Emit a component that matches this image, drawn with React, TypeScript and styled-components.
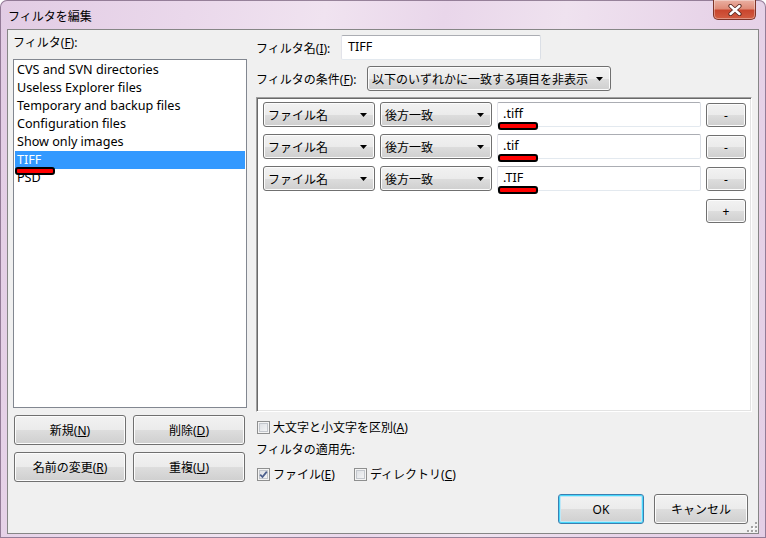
import React from 'react'
import styled, { createGlobalStyle } from 'styled-components'

const GlobalStyle = createGlobalStyle`
  html, body {
    margin: 0;
    padding: 0;
    background: #ffffff;
  }
  body {
    font-family: 'Noto Sans', 'Noto Sans CJK JP', sans-serif;
    font-size: 12px;
    color: #000;
  }
  * {
    box-sizing: border-box;
  }
`

const Window = styled.div`
  position: relative;
  width: 766px;
  height: 538px;
  display: flex;
  flex-direction: column;
  border-radius: 7px 7px 0 0;
  overflow: hidden;
  background: linear-gradient(
    100deg,
    #e2cce4 0%,
    #ead8eb 22%,
    #f0e3f0 38%,
    #e9d6ea 52%,
    #efe2ef 66%,
    #e7d3e8 84%,
    #e4cfe6 100%
  );
  box-shadow: inset 0 0 0 1px rgba(80, 55, 85, 0.55);
`

const TitleBar = styled.div`
  flex-shrink: 0;
  height: 29px;
  display: flex;
  align-items: flex-start;
  padding-left: 8px;
`

const Title = styled.div`
  margin-top: 8px;
  line-height: 16px;
  font-family: 'Noto Sans CJK JP', sans-serif;
  font-size: 12px;
`

const CloseButton = styled.div`
  margin-left: auto;
  margin-right: 10px;
  width: 43px;
  height: 20px;
  display: flex;
  align-items: center;
  justify-content: center;
  border: 1px solid #7e3428;
  border-top: none;
  border-radius: 0 0 5px 5px;
  background: linear-gradient(
    to bottom,
    #eab0a2 0%,
    #df8c79 45%,
    #c9462e 55%,
    #d25d42 100%
  );
  box-shadow: inset 0 0 0 1px rgba(255, 255, 255, 0.35);
`

const Client = styled.div`
  position: relative;
  flex-shrink: 0;
  margin: 0 7px;
  height: 505px;
  border: 1px solid #868686;
  background: #f0f0f0;
  display: flex;
  gap: 9px;
  padding: 5px 6px 0 5px;
`

const LeftColumn = styled.div`
  width: 234px;
  display: flex;
  flex-direction: column;
`

const RightColumn = styled.div`
  flex: 1;
  display: flex;
  flex-direction: column;
`

const FieldLabel = styled.div`
  height: 16px;
  line-height: 16px;
  margin-bottom: 8px;
  white-space: nowrap;
`

const ListBox = styled.div`
  height: 349px;
  border: 1px solid #828790;
  background: #fff;
  padding-top: 1px;
`

const ListItem = styled.div<{ $selected?: boolean }>`
  position: relative;
  height: 18px;
  line-height: 18px;
  margin: 0 1px;
  padding-left: 2px;
  font-size: 12.6px;
  white-space: nowrap;
  background: ${({ $selected }) => ($selected ? '#3399ff' : 'transparent')};
  color: ${({ $selected }) => ($selected ? '#fff' : '#000')};
`

const Redaction = styled.span<{ $top: number }>`
  position: absolute;
  left: 0;
  top: ${({ $top }) => $top}px;
  width: 40px;
  height: 8px;
  background: #ff0000;
  border: 2px solid #000;
  border-radius: 3px;
  z-index: 2;
`

const ButtonGrid = styled.div`
  display: grid;
  grid-template-columns: 112px 112px;
  column-gap: 7px;
  row-gap: 7px;
  margin-top: 7px;
  padding-left: 1px;
`

const PushButton = styled.div<{ $width?: number; $height?: number; $default?: boolean }>`
  width: ${({ $width }) => ($width ? `${$width}px` : 'auto')};
  height: ${({ $height }) => $height ?? 30}px;
  display: flex;
  align-items: center;
  justify-content: center;
  border: 1px solid ${({ $default }) => ($default ? '#3c7fb1' : '#707070')};
  border-radius: 3px;
  background: linear-gradient(
    to bottom,
    #f2f2f2 0%,
    #ebebeb 50%,
    #dddddd 51%,
    #cfcfcf 100%
  );
  box-shadow: ${({ $default }) =>
    $default
      ? 'inset 0 0 0 1px #48d8fb, inset 0 0 0 2px #bfe8f7'
      : 'inset 0 0 0 1px #fcfcfc'};
  white-space: nowrap;
`

const FormRow = styled.div`
  height: 25px;
  display: flex;
  align-items: center;
  & + & {
    margin-top: 6px;
  }
`

const RowLabel = styled.div<{ $width: number }>`
  width: ${({ $width }) => $width}px;
  flex-shrink: 0;
  white-space: nowrap;
`

const TextBox = styled.div<{ $width?: number; $pad?: number }>`
  position: relative;
  height: 25px;
  width: ${({ $width }) => ($width ? `${$width}px` : 'auto')};
  flex: ${({ $width }) => ($width ? '0 0 auto' : '1')};
  line-height: 22px;
  padding-left: ${({ $pad }) => $pad ?? 5}px;
  font-size: 12.6px;
  background: #fff;
  border: 1px solid;
  border-color: #abadb3 #dbdfe6 #e3e9ef #e2e3ea;
  border-radius: 2px;
  white-space: nowrap;
`

const ComboBox = styled.div<{ $width: number }>`
  flex-shrink: 0;
  width: ${({ $width }) => $width}px;
  height: 25px;
  display: flex;
  align-items: center;
  justify-content: space-between;
  padding: 0 7px 0 4px;
  border: 1px solid #707070;
  border-radius: 3px;
  background: linear-gradient(
    to bottom,
    #f2f2f2 0%,
    #ebebeb 50%,
    #dddddd 51%,
    #cfcfcf 100%
  );
  box-shadow: inset 0 0 0 1px #fcfcfc;
  white-space: nowrap;
`

const ConditionPanel = styled.div`
  height: 315px;
  margin-top: 6px;
  display: flex;
  flex-direction: column;
  gap: 7px;
  padding: 4px 5px 0 6px;
  background: #fff;
  border: 1px solid;
  border-color: #a0a0a0 #ffffff #ffffff #a0a0a0;
  box-shadow: inset 1px 1px 0 #696969, inset -1px -1px 0 #e3e3e3;
`

const ConditionRow = styled.div`
  height: 25px;
  display: flex;
  gap: 5px;
  align-items: flex-start;
`

const SmallButtonSlot = styled.div`
  margin-top: 1px;
`

const AddRow = styled.div`
  display: flex;
  justify-content: flex-end;
  margin-top: 1px;
`

const CheckRow = styled.div<{ $gap?: number; $top: number }>`
  height: 16px;
  margin-top: ${({ $top }) => $top}px;
  display: flex;
  align-items: center;
  gap: ${({ $gap }) => $gap ?? 0}px;
  padding-left: 1px;
`

const CheckItem = styled.label`
  display: flex;
  align-items: center;
  gap: 3px;
  white-space: nowrap;
`

const CheckBox = styled.span`
  width: 13px;
  height: 13px;
  display: flex;
  align-items: center;
  justify-content: center;
  border: 1px solid #8e8f8f;
  background: linear-gradient(135deg, #d9dce1 0%, #f8f8f8 100%);
  box-shadow: inset 0 0 0 1px #f4f4f4, inset 0 0 0 2px #c3c7cd;
`

const PlainLabel = styled.div`
  height: 16px;
  line-height: 16px;
  margin-top: 7px;
  white-space: nowrap;
`

const DialogButtons = styled.div`
  display: flex;
  justify-content: flex-end;
  gap: 10px;
  margin-top: 12px;
  padding-right: 4px;
`

const Grip = styled.div`
  position: absolute;
  right: 1px;
  bottom: 4px;
  width: 10px;
  height: 10px;
`

const DropArrow = () => (
  <svg width="7" height="4" viewBox="0 0 7 4">
    <path d="M0 0h7L3.5 4z" fill="#000" />
  </svg>
)

const CloseGlyph = () => (
  <svg width="14" height="12" viewBox="0 0 14 12">
    <path d="M2.5 2l9 8M11.5 2l-9 8" stroke="#5a2a22" strokeWidth="4.2" strokeLinecap="round" />
    <path d="M2.5 2l9 8M11.5 2l-9 8" stroke="#ffffff" strokeWidth="2.4" strokeLinecap="round" />
  </svg>
)

const CheckMark = () => (
  <svg width="9" height="9" viewBox="0 0 9 9">
    <path d="M1.2 4.6 L3.5 7 L7.8 1.6" fill="none" stroke="#4b5f8d" strokeWidth="1.8" />
  </svg>
)

const GripDots = () => (
  <svg width="10" height="10" viewBox="0 0 10 10">
    {[
      [8, 0],
      [4, 4],
      [8, 4],
      [0, 8],
      [4, 8],
      [8, 8],
    ].map(([x, y]) => (
      <g key={`${x}-${y}`}>
        <rect x={x + 1} y={y + 1} width="2" height="2" fill="#ffffff" />
        <rect x={x} y={y} width="2" height="2" fill="#a3a3a3" />
      </g>
    ))}
  </svg>
)

const filters = [
  'CVS and SVN directories',
  'Useless Explorer files',
  'Temporary and backup files',
  'Configuration files',
  'Show only images',
  'TIFF',
  'PSD',
]

const conditions = ['.tiff', '.tif', '.TIF']

const App: React.FC = () => (
  <>
    <GlobalStyle />
    <Window>
      <TitleBar>
        <Title>フィルタを編集</Title>
        <CloseButton>
          <CloseGlyph />
        </CloseButton>
      </TitleBar>
      <Client>
        <LeftColumn>
          <FieldLabel>
            フィルタ(<u>F</u>):
          </FieldLabel>
          <ListBox>
            {filters.map((name) => (
              <ListItem key={name} $selected={name === 'TIFF'}>
                {name}
                {name === 'TIFF' ? <Redaction $top={16} /> : null}
              </ListItem>
            ))}
          </ListBox>
          <ButtonGrid>
            <PushButton>
              <span>
                新規(<u>N</u>)
              </span>
            </PushButton>
            <PushButton>
              <span>
                削除(<u>D</u>)
              </span>
            </PushButton>
            <PushButton>
              <span>
                名前の変更(<u>R</u>)
              </span>
            </PushButton>
            <PushButton>
              <span>
                重複(<u>U</u>)
              </span>
            </PushButton>
          </ButtonGrid>
        </LeftColumn>

        <RightColumn>
          <FormRow>
            <RowLabel $width={85}>
              フィルタ名(<u>I</u>):
            </RowLabel>
            <TextBox $width={200} $pad={6}>
              TIFF
            </TextBox>
          </FormRow>
          <FormRow>
            <RowLabel $width={111}>
              フィルタの条件(<u>F</u>):
            </RowLabel>
            <ComboBox $width={244}>
              <span>以下のいずれかに一致する項目を非表示</span>
              <DropArrow />
            </ComboBox>
          </FormRow>

          <ConditionPanel>
            {conditions.map((ext) => (
              <ConditionRow key={ext}>
                <ComboBox $width={112}>
                  <span>ファイル名</span>
                  <DropArrow />
                </ComboBox>
                <ComboBox $width={112}>
                  <span>後方一致</span>
                  <DropArrow />
                </ComboBox>
                <TextBox>
                  {ext}
                  <Redaction $top={19} />
                </TextBox>
                <SmallButtonSlot>
                  <PushButton $width={40} $height={24}>
                    -
                  </PushButton>
                </SmallButtonSlot>
              </ConditionRow>
            ))}
            <AddRow>
              <PushButton $width={40} $height={24}>
                +
              </PushButton>
            </AddRow>
          </ConditionPanel>

          <CheckRow $top={7}>
            <CheckItem>
              <CheckBox />
              <span>
                大文字と小文字を区別(<u>A</u>)
              </span>
            </CheckItem>
          </CheckRow>
          <PlainLabel>フィルタの適用先:</PlainLabel>
          <CheckRow $gap={19} $top={8}>
            <CheckItem>
              <CheckBox>
                <CheckMark />
              </CheckBox>
              <span>
                ファイル(<u>E</u>)
              </span>
            </CheckItem>
            <CheckItem>
              <CheckBox />
              <span>
                ディレクトリ(<u>C</u>)
              </span>
            </CheckItem>
          </CheckRow>

          <DialogButtons>
            <PushButton $width={86} $default>
              OK
            </PushButton>
            <PushButton $width={94}>キャンセル</PushButton>
          </DialogButtons>
        </RightColumn>
        <Grip>
          <GripDots />
        </Grip>
      </Client>
    </Window>
  </>
)

export default App
